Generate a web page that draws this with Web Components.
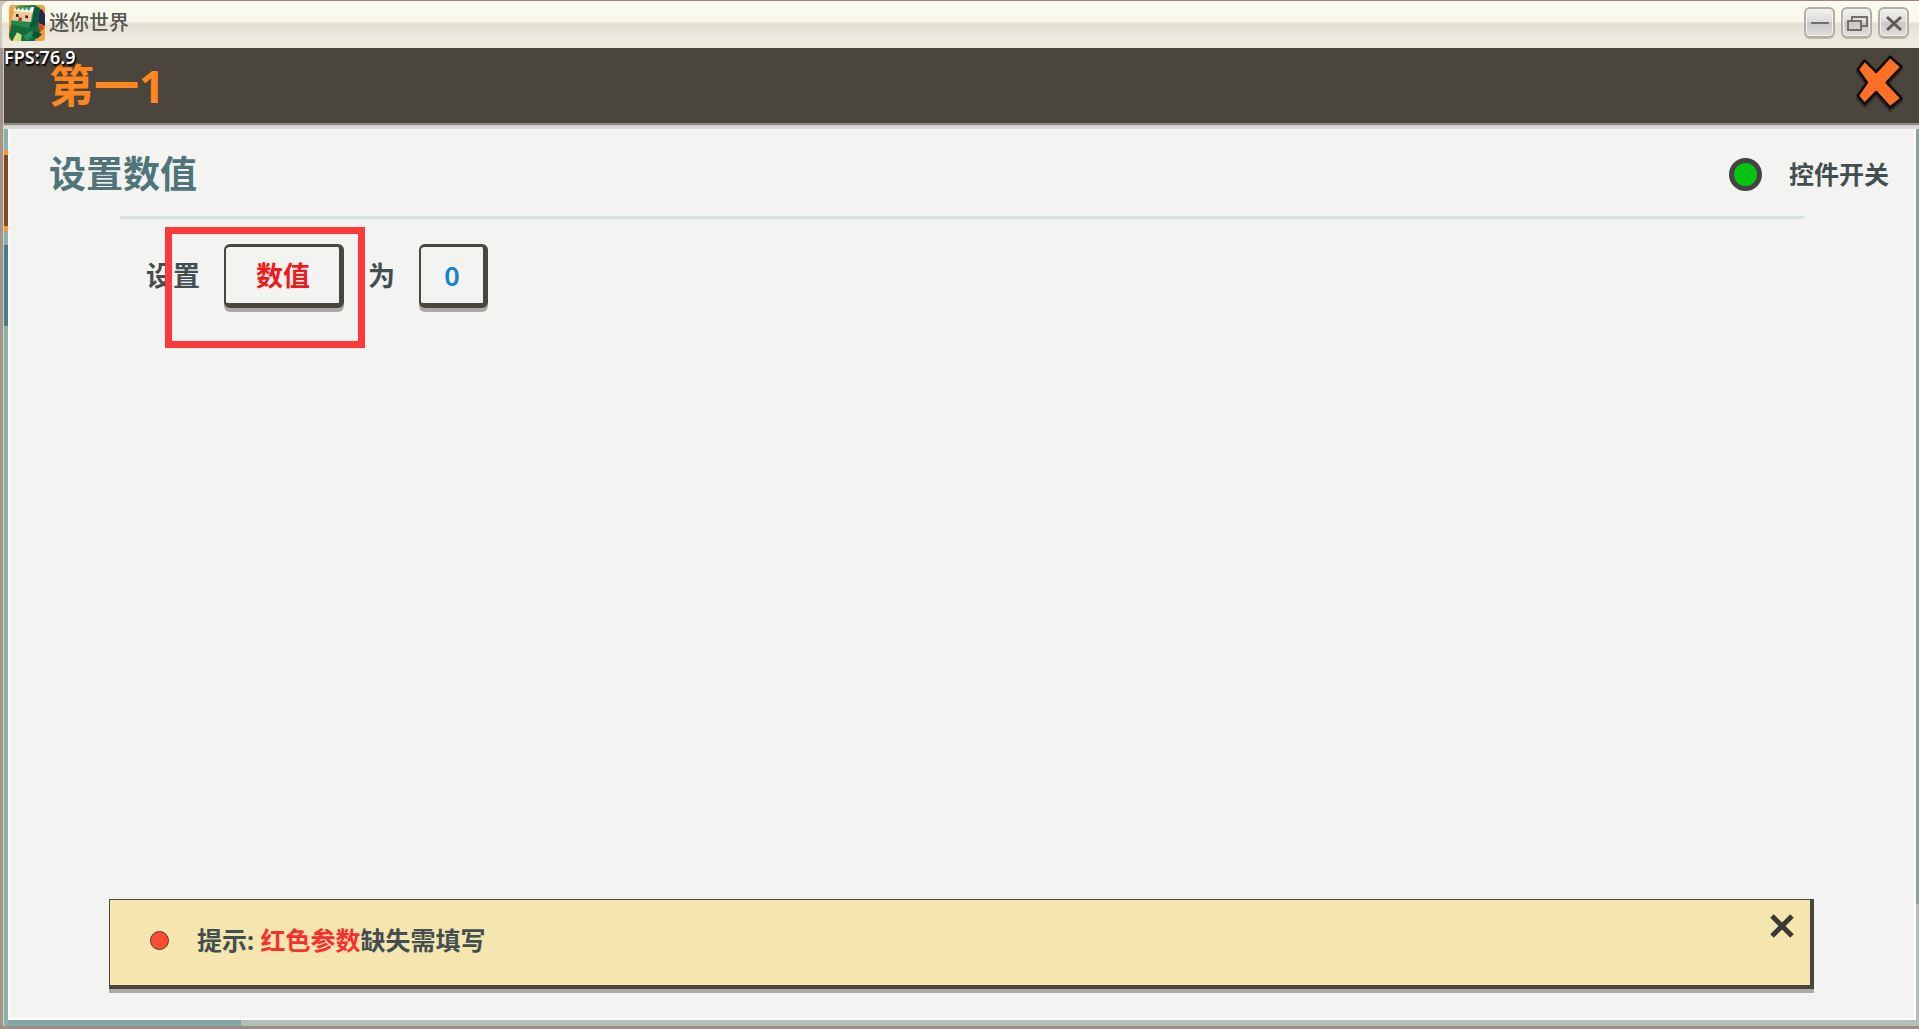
<!DOCTYPE html>
<html lang="zh-CN">
<head>
<meta charset="utf-8">
<title>迷你世界</title>
<style>
body { margin: 0; font-family: "Noto Sans", "Noto Sans CJK SC", sans-serif; color: #434b4b; }
</style>
</head>
<body>
<game-window>
  <title-bar slot="title">迷你世界</title-bar>
  <editor-header slot="header" fps="76.9">第一1</editor-header>
  <editor-panel slot="panel">
    <span slot="heading">设置数值</span>
    <switch-light slot="switch" checked>控件开关</switch-light>
    <param-row slot="row">
      <span>设置</span>
      <callout-frame><param-button kind="missing">数值</param-button></callout-frame>
      <span>为</span>
      <param-button kind="value">0</param-button>
    </param-row>
    <tip-bar slot="tip">提示: <em>红色参数</em>缺失需填写</tip-bar>
  </editor-panel>
</game-window>

<script>
const define = (name, html, setup) => {
  const template = document.createElement('template');
  template.innerHTML = html;
  customElements.define(name, class extends HTMLElement {
    constructor() {
      super();
      this.attachShadow({ mode: 'open' }).append(template.content.cloneNode(true));
    }
    connectedCallback() { if (setup) setup(this, this.shadowRoot); }
  });
};

define('game-window', `
<style>
  :host { display: flex; flex-direction: column; height: 100vh; box-sizing: border-box;
    border-top: 1px solid #9c857c; border-bottom: 3px solid #9c8c82; background: #cfc9b9; }
  .stage { flex: 1; display: flex; flex-direction: column; margin-left: 4px; min-height: 0;
    box-shadow: -1px 0 #d8d1c3, -4px 0 #a3948a;
    background:
      linear-gradient(#8ab0ac 102px, #ff9334 102px 107px, #7d4a2b 107px 178px, #ff9334 178px 183px,
        #8ab0ac 183px 197px, #4d7880 197px 202px, #43808f 202px 273px, #4d7880 273px 278px, #8ab0ac 278px) left / 4px 100% no-repeat,
      linear-gradient(#7fa4a2, #83a9a6) left bottom / 237px 6px no-repeat,
      linear-gradient(#8fa398 856px, #b4bfb8 856px) right / 3px 100% no-repeat,
      #b4bfb8; }
  slot[name=panel] { display: flex; flex: 1; min-height: 0; }
  main { flex: 1; display: flex; min-height: 0; padding: 0 3px 6px 4px; }
</style>
<slot name="title"></slot>
<div class="stage"><slot name="header"></slot><main><slot name="panel"></slot></main></div>`);

define('title-bar', `
<style>
  :host { display: flex; align-items: center; gap: 4px; height: 47px; box-sizing: border-box; padding: 0 10px 4px 9px;
    margin-left: 2px; border-radius: 8px 0 0 0;
    background: linear-gradient(#fafbf0, #f8f9eb 20px, #e5dfd3 23px, #ebe8df 36px, #f0eddf 46px);
    font-size: 20px; line-height: 28px; font-weight: 500; color: #555552; }
  .icon { width: 36px; height: 36px; margin-left: -2px; }
  .name { flex: 1; }
  .buttons { display: flex; gap: 6px; }
  button { width: 31px; height: 31px; padding: 0; box-sizing: border-box; border: 2px solid #b5aca4; border-radius: 6px;
    background: linear-gradient(#f1f1ec, #dedddc 45%, #c9c8c8 52%, #e0dfdc); box-shadow: inset 0 0 0 1px #f3f2ee, 0 1px #c9b9aa;
    display: grid; place-items: center; }
  button svg { width: 24px; height: 22px; fill: none; stroke: #776e69; stroke-width: 2; }
</style>
<svg class="icon" viewBox="0 0 108 108" aria-hidden="true">
  <defs><clipPath id="c"><rect width="108" height="108" rx="12"/></clipPath></defs>
  <g clip-path="url(#c)">
    <rect width="108" height="108" fill="#e87a16"/>
    <path d="M0 0H28L8 50 0 65ZM80 0h28v30ZM108 66v42H76Z" fill="#f3a13c"/>
    <path d="M80 16 98 12 108 28V62L88 54Z" fill="#252b46"/>
    <path d="M10 48 60 60 86 44 96 76 76 108H8L0 92Z" fill="#156b40"/>
    <path d="M20 6 76 0 92 8 88 56 60 72 8 58Z" fill="#14794b"/>
    <path d="M72 8 92 8 86 58 62 70Z" fill="#0d583b"/>
    <path d="M20 5 76 6 68 52 5 52Z" fill="#2da669"/>
    <path d="M16 14 71 18 65 51 7 46Z" fill="#f2c99c"/>
    <path d="M16 4l7 12 6-8 6 9 6-9 6 10 6-9 6 10 8-13h8l-4 17-57-6Z" fill="#fff7df"/>
    <path d="M21 27l8 1v8l-8-1ZM49 31l8 1v8l-8-1Z" fill="#2d211d"/>
    <path d="M30 37l9 1-1 11-11-1Z" fill="#bd3425"/>
    <path d="M8 47 64 52 61 68 6 58Z" fill="#238b50"/>
    <path d="M10 108 24 82 38 90 36 108Z" fill="#d8df79"/>
    <path d="M43 92 68 78 78 91 52 108Z" fill="#27915b"/>
    <path d="M87 62l14-4 3 14-13 7Z" fill="#ce4727"/>
    <path d="M78 79 100 88 84 101 67 91Z" fill="#0a5032"/>
  </g>
</svg>
<span class="name"><slot></slot></span>
<div class="buttons">
  <button aria-label="最小化"><svg viewBox="0 0 24 22"><path d="M3 11H21"/></svg></button>
  <button aria-label="还原"><svg viewBox="0 0 24 22"><path d="M7 9V5H22V14H17M3 9H16V18H3Z"/></svg></button>
  <button aria-label="关闭"><svg viewBox="0 0 24 22"><path d="M5 5 19 18M19 5 5 18" stroke="#625a55" stroke-width="3"/></svg></button>
</div>`);

define('editor-header', `
<style>
  :host { position: relative; z-index: 1; display: flex; align-items: center; justify-content: space-between;
    height: 75px; box-sizing: border-box; padding: 0 15px 0 45px; background: #4a463e; box-shadow: 0 2px 1px #8b8984, 0 6px #d9d9d7; }
  h1 { margin: 0; font-size: 45px; line-height: 64px; font-weight: 700; color: #ff871d; }
  .fps { position: absolute; left: 0; top: 0; font-size: 18px; line-height: 18px; font-weight: 600; color: #fff;
    text-shadow: 1px 1px 1px #000, 1px 2px 2px #000; }
  button { border: 0; background: none; padding: 0; margin-top: -6px; width: 48px; height: 57px; }
  svg { display: block; overflow: visible; }
</style>
<span class="fps"></span>
<h1><slot></slot></h1>
<button aria-label="关闭"><svg width="48" height="57" viewBox="229 162 145 172">
  <path d="M255 187 232 216 260 255 232 297 255 322 290 287 332 334 369 303 325 255 369 207 332 175 290 222Z" fill="#2c2924" stroke="#34312b" stroke-width="6" stroke-linejoin="round"/>
  <path d="M255 181 234 209 262 248 234 288 255 313 290 277 332 324 367 296 322 248 367 201 332 170 290 216Z" fill="#ff7027" stroke="#120f0b" stroke-width="8" stroke-linejoin="round"/>
</svg></button>`, (el, root) => { root.querySelector('.fps').textContent = 'FPS:' + el.getAttribute('fps'); });

define('editor-panel', `
<style>
  :host { flex: 1; display: flex; flex-direction: column; box-sizing: border-box; padding-bottom: 31px; background: #f3f3f1;
    box-shadow: inset -2px -2px #fff, inset 2px 0 #fafafa; }
  header { display: flex; justify-content: space-between; align-items: center; height: 93px; padding: 9px 27px 0 41px; box-sizing: border-box; }
  h2 { margin: 0; font-size: 37px; line-height: 52px; font-weight: 700; color: #50747a; }
  hr { width: auto; margin: 0 112px; border: 0; height: 3px; background: #d6e4db; }
  section { flex: 1; padding: 25px 138px 0; }
  footer { padding: 0 102px 0 101px; }
</style>
<header><h2><slot name="heading"></slot></h2><slot name="switch"></slot></header>
<hr>
<section><slot name="row"></slot></section>
<footer><slot name="tip"></slot></footer>`);

define('switch-light', `
<style>
  :host { display: block; }
  label { display: flex; align-items: center; gap: 27px; font-size: 25px; line-height: 34px; font-weight: 700; color: #434e50; }
  input { appearance: none; margin: 0; width: 33px; height: 33px; border-radius: 50%; border: 5px solid #434343; background: #999; }
  input:checked { background: #04c312; }
</style>
<label><input type="checkbox"><span><slot></slot></span></label>`,
(el, root) => { root.querySelector('input').checked = el.hasAttribute('checked'); });

define('param-row', `
<style>
  :host { display: flex; align-items: center; gap: 24px; font-size: 27px; line-height: 40px; font-weight: 700; color: #434e50; }
</style>
<slot></slot>`);

define('param-button', `
<style>
  :host { display: block; }
  button { display: block; height: 64px; min-width: 69px; box-sizing: border-box; padding: 2px 29px 0 30px; font: inherit;
    border: 3px solid #4a463e; border-width: 3px 5px 5px 2px; border-radius: 6px; background: #f3f3f1; color: #1583cd;
    box-shadow: 0 4px #aaa9a7; }
  :host([kind=missing]) button { color: #ef1a1a; }
  :host([kind=value]) button { padding: 2px 0 0; font-weight: 600; }
</style>
<button><slot></slot></button>`);

/* Red frame drawn over the parameter that has to be filled in. */
define('callout-frame', `
<style>
  :host { display: block; position: relative; }
  .frame { position: absolute; inset: -17px -21px -40px -59px; border: 7px solid #fc3838; pointer-events: none; }
</style>
<slot></slot><div class="frame"></div>`);

define('tip-bar', `
<style>
  :host { display: flex; align-items: center; height: 90px; box-sizing: border-box; padding: 0 16px 5px 40px; gap: 28px;
    background: #f5e5af; border: 2px solid #4a463e; border-width: 1px 4px 4px 1px; box-shadow: 0 4px #aaa9a7;
    font-size: 25px; line-height: 36px; font-weight: 700; color: #434e50; }
  .dot { width: 19px; height: 19px; box-sizing: border-box; border: 1px solid #4a3a32; border-radius: 50%; background: #ff4b36; }
  p { flex: 1; margin: 0; }
  ::slotted(em) { font-style: normal; color: #f92f2f; }
  button { align-self: flex-start; margin-top: 14px; padding: 0; border: 0; background: none; width: 24px; height: 24px; }
  svg { display: block; }
</style>
<span class="dot"></span>
<p><slot></slot></p>
<button aria-label="关闭提示"><svg width="24" height="24" viewBox="0 0 24 24"><path d="M2 2 22 22M22 2 2 22" stroke="#3b3935" stroke-width="5"/></svg></button>`);
</script>
</body>
</html>
